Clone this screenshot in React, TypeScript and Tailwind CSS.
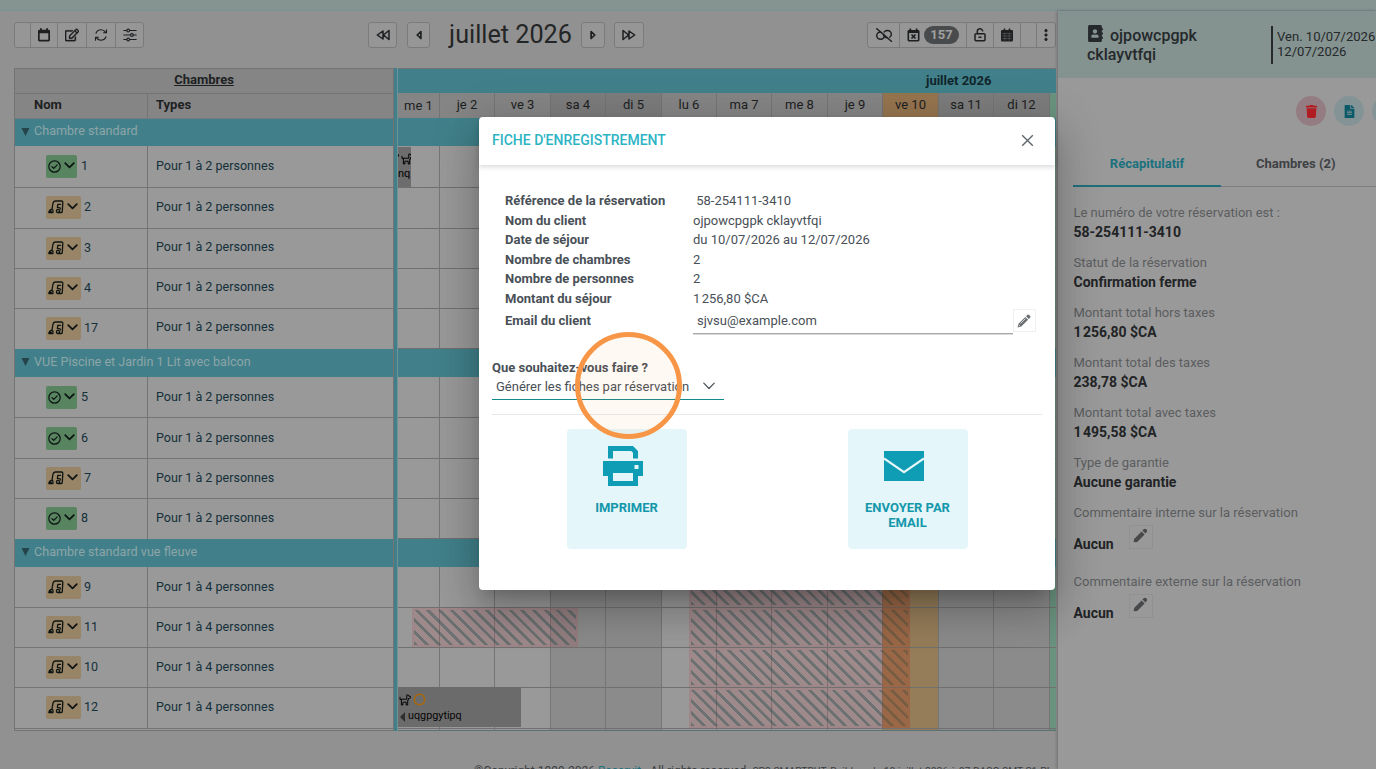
import React from "react";
import { FaRegEdit, FaAddressBook, FaTrash, FaFileAlt } from "react-icons/fa";
import { BsThreeDotsVertical } from "react-icons/bs";

type Room = { num: string; type: string; clean: boolean; h: string; pad: string; typePad: string };
type Group = { name: string; rooms: Room[] };

const P2 = "Pour 1 à 2 personnes";
const P4 = "Pour 1 à 4 personnes";

const groups: Group[] = [
  {
    name: "Chambre standard",
    rooms: [
      { num: "1", type: P2, clean: true, h: "h-[42px]", pad: "pt-[9px]", typePad: "pt-[8px]" },
      { num: "2", type: P2, clean: false, h: "h-[41px]", pad: "pt-[8px]", typePad: "pt-[7px]" },
      { num: "3", type: P2, clean: false, h: "h-[40px]", pad: "pt-[8px]", typePad: "pt-[6px]" },
      { num: "4", type: P2, clean: false, h: "h-[40px]", pad: "pt-[8px]", typePad: "pt-[6px]" },
      { num: "17", type: P2, clean: false, h: "h-[40px]", pad: "pt-[8px]", typePad: "pt-[6px]" },
    ],
  },
  {
    name: "VUE Piscine et Jardin 1 Lit avec balcon",
    rooms: [
      { num: "5", type: P2, clean: true, h: "h-[41px]", pad: "pt-[9px]", typePad: "pt-[8px]" },
      { num: "6", type: P2, clean: true, h: "h-[41px]", pad: "pt-[9px]", typePad: "pt-[8px]" },
      { num: "7", type: P2, clean: false, h: "h-[40px]", pad: "pt-[8px]", typePad: "pt-[7px]" },
      { num: "8", type: P2, clean: true, h: "h-[40px]", pad: "pt-[8px]", typePad: "pt-[7px]" },
    ],
  },
  {
    name: "Chambre standard vue fleuve",
    rooms: [
      { num: "9", type: P4, clean: false, h: "h-[41px]", pad: "pt-[9px]", typePad: "pt-[8px]" },
      { num: "11", type: P4, clean: false, h: "h-[40px]", pad: "pt-[8px]", typePad: "pt-[7px]" },
      { num: "10", type: P4, clean: false, h: "h-[40px]", pad: "pt-[8px]", typePad: "pt-[7px]" },
      { num: "12", type: P4, clean: false, h: "h-[41px]", pad: "pt-[8px]", typePad: "pt-[7px]" },
    ],
  },
];

const W = "bg-transparent";
const WE = "bg-[#8b8b8b]";
const days = [
  { label: "me 1", w: "w-[42px]", body: W, head: "bg-[#858585]" },
  { label: "je 2", w: "w-[55px]", body: W, head: "bg-[#858585]" },
  { label: "ve 3", w: "w-[56px]", body: W, head: "bg-[#858585]" },
  { label: "sa 4", w: "w-[55px]", body: WE, head: "bg-[#7c7c7c]" },
  { label: "di 5", w: "w-[56px]", body: WE, head: "bg-[#7c7c7c]" },
  { label: "lu 6", w: "w-[55px]", body: W, head: "bg-[#858585]" },
  { label: "ma 7", w: "w-[55px]", body: W, head: "bg-[#858585]" },
  { label: "me 8", w: "w-[56px]", body: W, head: "bg-[#858585]" },
  { label: "je 9", w: "w-[55px]", body: W, head: "bg-[#858585]" },
  { label: "ve 10", w: "w-[56px]", body: "bg-[#967d5a]", head: "bg-[#967550]" },
  { label: "sa 11", w: "w-[55px]", body: WE, head: "bg-[#7c7c7c]" },
  { label: "di 12", w: "w-[56px]", body: WE, head: "bg-[#7c7c7c]" },
  { label: "", w: "w-[7px]", body: "bg-[#6a937f]", head: "bg-[#6a937f]" },
];

const stroke = {
  fill: "none",
  stroke: "currentColor",
  strokeLinecap: "round" as const,
  strokeLinejoin: "round" as const,
};

function CalendarBlank() {
  return (
    <svg width="14" height="14" viewBox="0 0 14 14" fill="currentColor">
      <path fillRule="evenodd" d="M3 .3h1.800V1.800h4.400V.3H11v1.500h.6A1.400 1.400 0 0 1 13 3.200v8.900a1.400 1.400 0 0 1-1.400 1.400H2.400A1.400 1.400 0 0 1 1 12.100V3.200a1.400 1.400 0 0 1 1.400-1.400H3zM2.700 5.200v6.600h8.600V5.200z" />
    </svg>
  );
}
function Refresh() {
  return (
    <svg width="14" height="14" viewBox="0 0 14 14" {...stroke} strokeWidth="1.1">
      <path d="M2 5.200C2.800 3 4.600 1.800 7 1.800c1.900 0 3.500.9 4.500 2.300M12.500 1.700v3H9.600M12 8.800c-.8 2.200-2.600 3.400-5 3.400-1.900 0-3.500-.9-4.500-2.300M1.500 12.300v-3h2.900" />
    </svg>
  );
}
function Sliders() {
  return (
    <svg width="14" height="14" viewBox="0 0 14 14" {...stroke} strokeWidth="1.1">
      <path d="M.8 2.500h3M6.600 2.500h6.600M.8 7h6.700M10.300 7h2.900M.8 11.500h3M6.600 11.500h6.600" />
      <circle cx="5.200" cy="2.500" r="1.400" />
      <circle cx="8.900" cy="7" r="1.400" />
      <circle cx="5.200" cy="11.500" r="1.400" />
    </svg>
  );
}
function DoubleArrow({ flip = false }: { flip?: boolean }) {
  return (
    <svg width="14" height="12" viewBox="0 0 14 12" className={flip ? "-scale-x-100" : ""} {...stroke} strokeWidth="1.5">
      <path d="M7 2 1.300 6 7 10zM13 1.500 7.400 6 13 10.500z" />
    </svg>
  );
}
function Arrow({ flip = false }: { flip?: boolean }) {
  return (
    <svg width="6" height="10" viewBox="0 0 6 10" className={flip ? "-scale-x-100" : ""} {...stroke} strokeWidth="1.700">
      <path d="M4.900 1.500 1.200 5l3.700 3.500z" />
    </svg>
  );
}
function Unlink() {
  return (
    <svg width="18" height="14" viewBox="0 0 18 14" {...stroke} strokeWidth="1.500">
      <ellipse cx="5.600" cy="7.600" rx="3.900" ry="3.600" />
      <ellipse cx="12.400" cy="6.200" rx="3.900" ry="3.600" />
      <path d="M2.600-.6l13.600 12.800" stroke="#969696" strokeWidth="1.200" />
      <path d="M1.800.7l14.600 12.600" />
    </svg>
  );
}
function CalendarRemove() {
  return (
    <svg width="13" height="14" viewBox="0 0 13 14" fill="currentColor">
      <path fillRule="evenodd" d="M2.500.5h1.700V2h4.600V.5h1.700V2h.6a1.400 1.400 0 0 1 1.400 1.400v8.700a1.400 1.400 0 0 1-1.400 1.400H1.900a1.400 1.400 0 0 1-1.400-1.400V3.400A1.400 1.400 0 0 1 1.900 2h.6zM2.100 5v6.900h8.800V5z" />
      <path d="m4.500 6.500 4 4m0-4-4 4" stroke="currentColor" strokeWidth="1.700" />
    </svg>
  );
}
function LockOpen() {
  return (
    <svg width="12" height="14" viewBox="0 0 12 14" {...stroke} strokeWidth="1.500">
      <rect x="1" y="5.800" width="10" height="7" rx="1" />
      <path d="M3.300 5.500V3.600a2.700 2.700 0 0 1 5.300-.8" />
      <path d="M5 9.300h2" />
    </svg>
  );
}
function CalendarGrid() {
  return (
    <svg width="12" height="14" viewBox="0 0 12 14" fill="currentColor">
      <path d="M2.700.5h1.600V2h3.400V.5h1.600V2h1.400A1.300 1.300 0 0 1 12 3.300v8.900a1.300 1.300 0 0 1-1.300 1.300H1.300A1.300 1.300 0 0 1 0 12.200V3.300A1.300 1.300 0 0 1 1.300 2h1.400z" />
      <path d="M1.200 5.400h9.600M1.200 8h9.600M1.200 10.600h9.600M3.800 5v7.500M8.200 5v7.500" stroke="#6a6a6a" strokeWidth=".5" />
    </svg>
  );
}
function CheckCircle() {
  return (
    <svg width="13" height="13" viewBox="0 0 13 13" {...stroke} strokeWidth="1.200">
      <circle cx="6.500" cy="6.500" r="5.700" />
      <path d="m4 6.700 1.800 1.700 3.400-3.500" />
    </svg>
  );
}
function Cleaning() {
  return (
    <svg width="16" height="14" viewBox="0 0 16 14" {...stroke} strokeWidth="1.300">
      <path d="M4 9 5 3.200C5.300 1.700 6 1 7.300 1h6.200c1 0 1.400.5 1.300 1.500l-.5 8.700c0 .9-.4 1.300-1.100 1.300h-3" />
      <path d="M.8 12.600c.4-2 1.500-3.200 3-3.200.9 0 1.300.6 1.200 1.400l-.2 1.800zM2.400 11.400l.9.100" />
      <path d="M12.600 4.300H9.800l-.4 3.300h1.800c.9 0 1.300.5 1.300 1.300" />
      <circle cx="10" cy="10.900" r="1.600" />
    </svg>
  );
}
function Chevron({ className = "" }: { className?: string }) {
  return (
    <svg width="11" height="7" viewBox="0 0 11 7" className={className} {...stroke} strokeWidth="1.700">
      <path d="m1.200 1.200 4.300 4.200 4.300-4.200" />
    </svg>
  );
}
function Dog() {
  return (
    <svg width="12" height="12" viewBox="0 0 12 12" {...stroke} strokeWidth="1">
      <path d="M1 3.300v2.200h1.400V11h1.500V8.200h3.300V11h1.500V6.300h.6V4.500h1.300c.6 0 .8-.3.8-.8V2.200H9.800L9.200 1H7.800v4.200H2.200" />
    </svg>
  );
}
function Pencil({ className = "" }: { className?: string }) {
  return (
    <svg width="15" height="15" viewBox="0 0 14 14" fill="currentColor" className={className}>
      <path d="M.6 13.400 1 10.200 8 3.200 10.900 6.100 3.900 13zM8.800 2.400l.9-.9c1-1 2-1.100 2.900-.2s.8 1.900-.2 2.900l-.8.9z" />
    </svg>
  );
}
function PencilOutlined() {
  return (
    <svg width="14" height="14" viewBox="0 0 14 14" fill="currentColor">
      <path d="M.6 13.400 1.500 9.700 8.300 2.900 11.100 5.700 4.300 12.500zM9 2.200l1-1c.8-.8 1.600-.8 2.300-.1l.6.6c.7.700.7 1.500-.1 2.300l-1 1z" />
      <path d="m3.500 9.500 5-5M1.900 11.100l1.100 1" stroke="#fff" strokeWidth=".7" />
    </svg>
  );
}

function Btn({ w, children, last = false }: { w: string; children?: React.ReactNode; last?: boolean }) {
  return (
    <div className={`flex h-full items-center justify-center gap-1 ${w} ${last ? "" : "border-r border-[#7b7b7b]"}`}>
      {children}
    </div>
  );
}

const btnBox = "flex h-[26px] items-center justify-center rounded-[3px] border border-[#7b7b7b] bg-[#969696] text-[#1d1f21]";

function Toolbar() {
  return (
    <div className="flex h-[57px] shrink-0 items-start pt-[11px] pl-[14px]">
      <div className="flex h-[26px] w-[130px] rounded-[3px] border border-[#7b7b7b] bg-[#969696] text-[#1d1f21]">
        <Btn w="w-[16px]" />
        <Btn w="w-[27px]"><CalendarBlank /></Btn>
        <Btn w="w-[29px]"><FaRegEdit size={14} strokeWidth={14} stroke="currentColor" /></Btn>
        <Btn w="w-[29px]"><Refresh /></Btn>
        <Btn w="w-[27px]" last><Sliders /></Btn>
      </div>
      <div className={`ml-[224px] w-[29px] ${btnBox}`}><DoubleArrow /></div>
      <div className={`ml-[10px] w-[23px] ${btnBox}`}><Arrow /></div>
      <div className="ml-[16px] h-[26px] w-[129px] whitespace-nowrap text-center text-[25.200px] leading-[25px] text-[#232526]">juillet 2026</div>
      <div className={`ml-[6px] w-[24px] ${btnBox}`}><Arrow flip /></div>
      <div className={`ml-[9px] w-[30px] ${btnBox}`}><DoubleArrow flip /></div>
      <div className="ml-[223px] flex h-[26px] w-[189px] rounded-[3px] border border-[#7b7b7b] bg-[#969696] text-[#1d1f21]">
        <Btn w="w-[32px]"><Unlink /></Btn>
        <Btn w="w-[67px]">
          <CalendarRemove />
          <span className="flex h-[18px] w-[35px] items-center justify-center rounded-full bg-[#484a4c] text-[13px] font-bold text-[#a0a0a0]">157</span>
        </Btn>
        <Btn w="w-[27px]"><LockOpen /></Btn>
        <Btn w="w-[27px]"><CalendarGrid /></Btn>
        <Btn w="w-[16px]" />
        <Btn w="w-[18px]" last><BsThreeDotsVertical size={14} strokeWidth={0.600} stroke="currentColor" /></Btn>
      </div>
    </div>
  );
}

function RoomTable() {
  return (
    <div className="w-[380px] shrink-0 border-x border-t border-[#747474]">
      <div className="flex h-[25px] items-center justify-center border-b border-[#747474] bg-[#858585] pb-[3px] text-[13px] font-bold text-[#1d2122] underline">Chambres</div>
      <div className="flex h-[25px] border-b border-[#747c7d] bg-[#858585] text-[13px] font-bold text-[#1d2122]">
        <div className="flex w-[133px] items-center border-r border-[#747474] pb-[2px] pl-[19px]">Nom</div>
        <div className="flex items-center pb-[2px] pl-[8px]">Types</div>
      </div>
      {groups.map((g, gi) => (
        <React.Fragment key={g.name}>
          <div className={`flex items-center bg-[#41808a] pb-[2px] text-[12.600px] text-[#8da5a8] ${gi === 0 ? "h-[27px]" : "h-[28px]"}`}>
            <svg width="9" height="8" viewBox="0 0 9 8" className="ml-[6px] mr-[4px]"><path d="M.5 0h8L4.500 8z" fill="#24434a" /></svg>
            {g.name}
          </div>
          {g.rooms.map((r, i) => (
            <div key={r.num} className={`flex ${r.h} bg-[#999] text-[12.550px] text-[#14303a] ${i < g.rooms.length - 1 || gi === 2 ? "border-b border-[#747474]" : ""}`}>
              <div className={`flex w-[133px] items-start border-r border-[#747474] pl-[31px] ${r.pad}`}>
                <span className={`flex h-[23px] items-center rounded-[2px] pb-px text-[#0c1312] ${r.clean ? "w-[31px] bg-[#588460] pl-[2px]" : "w-[35px] bg-[#988466] pl-[2px]"}`}>
                  {r.clean ? <CheckCircle /> : <Cleaning />}
                  <Chevron className="mb-px ml-[3px]" />
                </span>
                <span className={`leading-[22px] ${r.clean ? "ml-[4px]" : "ml-[3px]"}`}>{r.num}</span>
              </div>
              <div className={`pl-[8px] leading-[23px] ${r.typePad}`}>{r.type}</div>
            </div>
          ))}
        </React.Fragment>
      ))}
      <div className="h-[2px] border-b border-[#747474] bg-[#999]" />
    </div>
  );
}

const blocked =
  "absolute box-border border-2 border-[#b0505a]/25 bg-clip-padding bg-[repeating-linear-gradient(45deg,#4650508c_0px,#4650508c_2.600px,#b0505a38_3px,#b0505a38_8.300px)]";

function Timeline() {
  return (
    <div className="relative w-[658px] overflow-hidden">
      <div className="h-[25px] border-t border-[#747474] bg-[#41808a] text-[13px] font-bold text-[#11262b]">
        <div className="ml-[465px] w-[192px] pl-[63px] leading-[23px]">juillet 2026</div>
      </div>
      <div className="flex h-[25px] text-[13px] text-[#1d2122]">
        {days.map((d, i) => (
          <div key={d.label} className={`flex shrink-0 items-center justify-center border-r border-[#747474] ${i === 0 ? "" : "pb-[2px]"} ${d.w} ${d.head}`}>{d.label}</div>
        ))}
      </div>
      <div className="relative flex h-[613px] border-b border-[#5c6f73] bg-[#999]">
        {days.map((d) => (
          <div key={d.label} className={`shrink-0 border-r border-[#757575] ${d.w} ${d.body}`} />
        ))}
        <div className="absolute inset-0 flex flex-col">
          {groups.map((g) => (
            <React.Fragment key={g.name}>
              <div className="h-[28px] bg-[#41808a]" />
              {g.rooms.map((r) => (
                <div key={r.num} className={`${r.h} border-b border-[#707070]`} />
              ))}
            </React.Fragment>
          ))}
        </div>
        <div className="absolute top-[29px] left-0 h-[40px] w-[13px] overflow-hidden bg-[#6d6d6d] text-[11px] leading-[12px] text-black">
          <div className="absolute top-[6px] left-[3px]"><Dog /></div>
          <div className="absolute top-[7px] left-[-2px] size-[3px] rounded-full bg-black" />
          <div className="absolute top-[21px] left-0">nq</div>
        </div>
        <div className={`${blocked} top-[490px] left-[14px] h-[39px] w-[166px]`} />
        <div className={`${blocked} top-[450px] left-[291px] h-[39px] w-[221px]`} />
        <div className={`${blocked} top-[490px] left-[291px] h-[39px] w-[221px]`} />
        <div className={`${blocked} top-[530px] left-[291px] h-[39px] w-[221px]`} />
        <div className={`${blocked} top-[570px] left-[291px] h-[40px] w-[221px]`} />
        <div className="absolute top-[450px] left-[484px] h-[160px] w-[28px] bg-[#97501f]/30" />
        <div className="absolute top-[569px] left-0 h-[40px] w-[123px] bg-[#6b6b6b] pt-[6px] pl-px text-[11px] text-[#060606]">
          <div className="flex h-[13px] items-center gap-[2px]">
            <Dog />
            <svg width="13" height="13" viewBox="0 0 13 13" fill="none" stroke="#a8680c" strokeWidth="1.500"><circle cx="6.500" cy="6.500" r="5.200" /></svg>
          </div>
          <div className="flex h-[20px] items-center gap-[3px] pt-px">
            <svg width="5" height="10" viewBox="0 0 5 10" className="ml-px"><path d="M5 0v10L0 5z" fill="#2e2e2e" /></svg>
            <span className="text-[10.800px]">uqgpgytipq</span>
          </div>
        </div>
      </div>
    </div>
  );
}

const summary = [
  ["Le numéro de votre réservation est :", "58-254111-3410"],
  ["Statut de la réservation", "Confirmation ferme"],
  ["Montant total hors taxes", "1\u200a256,80 $CA"],
  ["Montant total des taxes", "238,78 $CA"],
  ["Montant total avec taxes", "1\u200a495,58 $CA"],
  ["Type de garantie", "Aucune garantie"],
];

function SidePanel() {
  return (
    <div className="flex w-[318px] shrink-0 flex-col overflow-hidden bg-[#999] shadow-[-1px_0_3px_rgba(0,0,0,0.25)]">
      <div className="flex h-[67px] bg-[#849290]">
        <div className="w-[213px] pt-[14px] pl-[29px] text-[16.050px] leading-[19px] font-medium text-[#25292b]">
          <FaAddressBook className="mr-[6px] inline-block align-[-1px]" size={17} />ojpowcpgpk
          <br />cklayvtfqi
        </div>
        <div className="mt-[15px] flex h-[38px] items-center border-l-2 border-[#25292b] pb-[2px] pl-[4px] text-[13.050px] leading-[15px] whitespace-nowrap text-[#25292b]">
          <div>Ven. 10/07/2026<br />12/07/2026</div>
        </div>
      </div>
      <div className="flex h-[64px] items-center gap-[8px] pt-[2px] pl-[238px]">
        <div className="flex size-[30px] shrink-0 items-center justify-center rounded-full bg-[#947d82] text-[#b01c22]"><FaTrash size={13} /></div>
        <div className="flex size-[30px] shrink-0 items-center justify-center rounded-full bg-[#849496] text-[#0a5a6a]"><FaFileAlt size={13} /></div>
        <div className="size-[30px] shrink-0 rounded-full bg-[#849496]" />
      </div>
      <div className="ml-[15px] flex h-[45px] text-[13px] font-bold">
        <div className="flex w-[148px] items-center justify-center border-b-2 border-[#1f6f7b] pt-px text-[#19717e]">Récapitulatif</div>
        <div className="flex w-[155px] items-center border-b border-[#7c8082] pl-[35px] text-[#3e4144]">Chambres (2)</div>
      </div>
      <div className="pt-[16px] pl-[15.500px] text-[13px] leading-[20px]">
        {summary.map(([k, v]) => (
          <div key={k} className="h-[50px]">
            <div className="text-[#5b5d5f]">{k}</div>
            <div className="text-[14px] leading-[18px] font-bold text-[#222426]">{v}</div>
          </div>
        ))}
        {["interne", "externe"].map((k) => (
          <div key={k} className="h-[69px]">
            <div className="text-[#5b5d5f]">Commentaire {k} sur la réservation</div>
            <div className="flex gap-[15px] text-[14px] font-bold text-[#222426]">
              <span className="pt-[11px]">Aucun</span>
              <span className="mt-[2px] flex size-[24px] items-center justify-center border border-[#919191] text-[#47494b]"><Pencil className="mb-[3px]" /></span>
            </div>
          </div>
        ))}
      </div>
    </div>
  );
}

const fields = [
  ["Référence de la réservation", "\u00a058-254111-3410"],
  ["Nom du client", "ojpowcpgpk cklayvtfqi"],
  ["Date de séjour", "du 10/07/2026 au 12/07/2026"],
  ["Nombre de chambres", "2"],
  ["Nombre de personnes", "2"],
  ["Montant du séjour", "1\u200a256,80 $CA"],
];

function Modal() {
  return (
    <div className="absolute top-[117px] left-[479px] flex h-[473px] w-[576px] flex-col rounded-[4px] bg-white text-[13px] text-[#495057] shadow-[0_11px_15px_-7px_rgba(0,0,0,0.2),0_24px_38px_3px_rgba(0,0,0,0.14),0_9px_46px_8px_rgba(0,0,0,0.12)]">
      <div className="flex h-[48px] items-center justify-between pr-[21px] pb-px pl-[13px] shadow-[0_2px_5px_rgba(0,0,0,0.15)]">
        <span className="text-[14px] font-medium text-[#2db4c4]">FICHE D'ENREGISTREMENT</span>
        <svg width="13" height="13" viewBox="0 0 13 13" stroke="#5f666c" strokeWidth="1.400"><path d="m1.200 1.200 10.600 10.600m0-10.600L1.200 11.800" /></svg>
      </div>
      <div className="h-[168.600px] pt-[26px] pl-[26px]">
        {fields.map(([k, v]) => (
          <div key={k} className="flex h-[19.550px] items-center leading-[19px]">
            <div className="w-[188px] font-bold">{k}</div>
            <div>{v}</div>
          </div>
        ))}
        <div className="flex h-[25px] items-center">
          <div className="w-[188px] pb-px font-bold">Email du client</div>
          <div className="flex h-[26px] w-[320px] translate-y-[0.300px] items-center border-b border-[#80868b] pl-[4px]">sjvsu@example.com</div>
          <div className="flex size-[23px] items-center justify-center border border-[#eef0f1] pr-px text-[#6b7075]"><PencilOutlined /></div>
        </div>
      </div>
      <div className="mx-[13px] mt-[25.400px] border-b border-[#e6e8ea] pb-[14px]">
        <div className="leading-[17px] font-bold">Que souhaitez-vous faire ?</div>
        <div className="flex h-[24px] w-[232px] items-center justify-between border-b border-[#128a8c] pr-[9px] pb-[2px] pl-[4px]">
          Générer les fiches par réservation
          <svg width="12" height="8" viewBox="0 0 12 8" {...stroke} strokeWidth="1.200"><path d="m.8 1.200 5.200 5.300 5.200-5.300" /></svg>
        </div>
      </div>
      <div className="flex pt-[14px] pl-[88px] text-[#1397ab]">
        <div className="flex size-[120px] flex-col items-center rounded-[4px] bg-[#e4f6f9] pt-[17px] text-center font-bold">
          <svg width="41" height="41" viewBox="0 0 41 41" className="mr-[7px]" fill="#0e9db5" fillRule="evenodd">
            <path d="M5 0h25l5 5v7.500h-5V6.800L28.200 5H10v7.500H5zM0 15h40v15h-5v10H5V30H0zM10 27v8h20v-8zM31.500 19v4h4v-4z" />
          </svg>
          <div className="mt-[13px] mr-px leading-[15px]">IMPRIMER</div>
        </div>
        <div className="ml-[161px] flex size-[120px] flex-col items-center rounded-[4px] bg-[#e4f6f9] pt-[22px] text-center font-bold">
          <svg width="40" height="30" viewBox="0 0 40 30" className="mr-[8px]">
            <path d="M0 0h40v30H0z" fill="#0e9db5" />
            <path d="m0 7.500 20 13.700L40 7.500" fill="none" stroke="#e4f6f9" strokeWidth="2.200" />
          </svg>
          <div className="mt-[19px] mr-px leading-[15px]">ENVOYER PAR<br />EMAIL</div>
        </div>
      </div>
    </div>
  );
}

export default function App() {
  return (
    <div className="relative h-[769px] w-[1376px] overflow-hidden bg-[#919191] font-[Roboto,sans-serif]">
      <div className="h-[11px] border-b border-[#7a9193] bg-[#859391]" />
      <div className="flex h-[758px]">
        <div className="flex w-[1058px] shrink-0 flex-col">
          <Toolbar />
          <div className="flex h-[663px] shrink-0 pl-[14px]">
            <RoomTable />
            <div className="w-[4px] shrink-0 border-r border-[#6f9498] bg-[#41808a]" />
            <Timeline />
          </div>
          <div className="h-[38px] overflow-hidden pt-[32px] pl-[474px] text-[12px] leading-[16px] whitespace-nowrap text-[#3b3d3f]">
            ©Copyright 1999-2026 <span className="text-[#1f6f7b]">Reservit</span> - All rights reserved. <span className="text-[10.300px]">SP3 SMARTBUT, Build on du 10 juillet 2026 à 07 DASO SMT S1-PL</span>
          </div>
        </div>
        <SidePanel />
      </div>
      <Modal />
      <div className="absolute top-[332px] left-[575px] size-[107px] rounded-full border-[5px] border-[#f79646] bg-[#f79646]/6" />
    </div>
  );
}
